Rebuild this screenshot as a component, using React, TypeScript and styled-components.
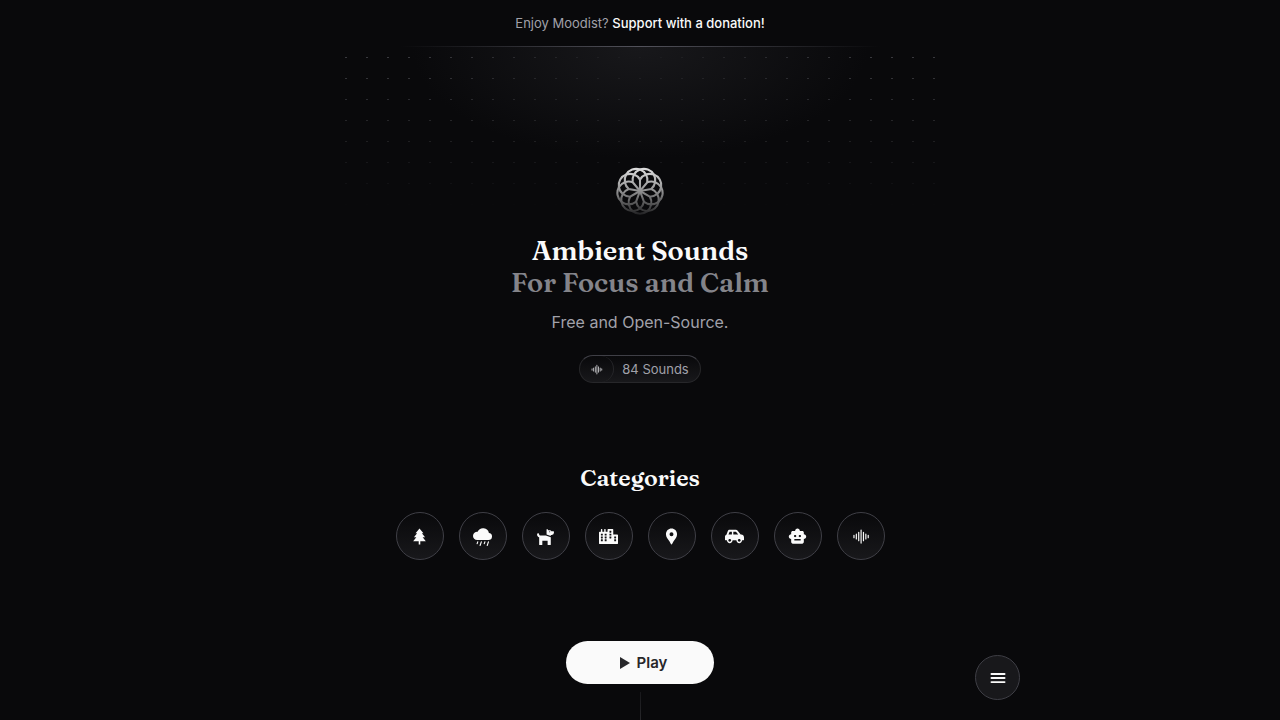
import React from 'react';
import styled, { createGlobalStyle } from 'styled-components';
import { BiPlay, BiSolidTree } from 'react-icons/bi';
import { BsFillCloudRainFill, BsSoundwave } from 'react-icons/bs';
import { FaCarSide, FaCity, FaDog } from 'react-icons/fa';
import { IoMenu } from 'react-icons/io5';
import { MdLocationPin, MdSmartToy } from 'react-icons/md';

const GlobalStyle = createGlobalStyle`
  *, *::before, *::after { box-sizing: border-box; }
  body {
    margin: 0;
    background: #09090b;
    color: #fafafa;
    font-family: Inter, "Liberation Sans", sans-serif;
    font-size: 16px;
  }
`;

const Page = styled.div`
  display: flex;
  flex-direction: column;
  min-height: 100vh;
`;

const Banner = styled.header`
  display: flex;
  flex-direction: column;
  align-items: center;
  font-size: 13px;
  line-height: 20px;
  color: #a1a1aa;
`;

const BannerText = styled.p`
  margin: 0;
  padding: 13px 0;
`;

const DonateLink = styled.a`
  color: #fafafa;
  font-weight: 500;
  text-decoration: none;
`;

const Divider = styled.div`
  width: 100%;
  max-width: 480px;
  height: 1px;
  background: linear-gradient(90deg, transparent, #52525b, transparent);
`;

const Main = styled.main`
  display: flex;
  flex: 1;
  flex-direction: column;
  align-items: center;
`;

const Hero = styled.section`
  position: relative;
  display: flex;
  flex-direction: column;
  align-items: center;
  width: 100%;
  max-width: 600px;
  padding-top: 120px;
  text-align: center;
`;

const Pattern = styled.div`
  position: absolute;
  inset: 0 0 auto;
  height: 180px;
  background-image: radial-gradient(#71717a 5%, transparent 5%);
  background-position: top center;
  background-size: 21px 21px;
  mask-image: linear-gradient(#fff, transparent 90%);
`;

const Glow = styled.div`
  position: absolute;
  inset: 0 0 auto;
  height: 140px;
  background: radial-gradient(38% 80% at 50% 0, #18181b, #18181b00);
`;

const LogoMark = styled.svg`
  position: relative;
  width: 48px;
  height: 48px;
`;

const Title = styled.h1`
  margin: 20px 0 0;
  font-family: Fraunces, "Liberation Serif", serif;
  font-size: 27px;
  font-weight: 600;
  line-height: 32px;
`;

const TitleLine = styled.span<{ $muted?: boolean }>`
  display: block;
  color: ${(p) => (p.$muted ? '#84848a' : '#fafafa')};
`;

const Tagline = styled.p`
  margin: 11px 0 0;
  line-height: 24px;
  color: #a1a1aa;
`;

const SoundCount = styled.div`
  display: flex;
  align-items: stretch;
  height: 28px;
  margin-top: 21px;
  border: 1px solid #27272a;
  border-top-color: #3f3f46;
  border-radius: 14px;
  background: linear-gradient(#09090b, #18181b);
  color: #a1a1aa;
  font-size: 13px;
  line-height: 26px;
`;

const CountIcon = styled.span`
  display: flex;
  align-items: center;
  padding: 0 10px;
  border-right: 1px solid #27272a;
  border-radius: 13px;
  color: #d4d4d8;
`;

const CountText = styled.span`
  padding: 0 11px 0 8px;
`;

const Categories = styled.nav`
  display: flex;
  flex-direction: column;
  align-items: center;
  gap: 18px;
  margin-top: 79px;
`;

const SectionTitle = styled.h2`
  margin: 0;
  font-family: Fraunces, "Liberation Serif", serif;
  font-size: 23px;
  font-weight: 600;
  line-height: 32px;
`;

const CategoryList = styled.div`
  display: flex;
  flex-wrap: wrap;
  justify-content: center;
  gap: 15px;
`;

const CategoryLink = styled.a`
  display: flex;
  align-items: center;
  justify-content: center;
  width: 48px;
  height: 48px;
  border: 1px solid #3f3f46;
  border-radius: 50%;
  background: linear-gradient(#09090b, #18181b);
  color: #fafafa;
  font-size: 19px;
`;

const PlayButton = styled.button`
  display: flex;
  align-items: center;
  justify-content: center;
  width: 148px;
  height: 43px;
  margin-top: 81px;
  padding: 0;
  border: 0;
  border-radius: 22px;
  background: #fafafa;
  color: #27272a;
  font: 600 15px/24px Inter, "Liberation Sans", sans-serif;
`;

const Connector = styled.div`
  flex: 1;
  width: 1px;
  min-height: 24px;
  margin-top: 8px;
  background: linear-gradient(#18181b, #27272a);
`;

const MenuDock = styled.div`
  position: fixed;
  right: 0;
  bottom: 20px;
  left: 0;
  display: flex;
  justify-content: flex-end;
  width: 100%;
  max-width: 760px;
  margin: 0 auto;
  pointer-events: none;
`;

const MenuButton = styled.button`
  display: flex;
  align-items: center;
  justify-content: center;
  width: 45px;
  height: 45px;
  padding: 0;
  border: 1px solid #3f3f46;
  border-radius: 50%;
  background: #18181b;
  color: #fafafa;
  font-size: 20px;
  pointer-events: auto;
`;

const petals = Array.from({ length: 9 }, (_, i) => 90 + i * 40);

function Logo() {
  return (
    <LogoMark viewBox="-24 -24 48 48" fill="none" role="img" aria-label="Moodist">
      <defs>
        <linearGradient id="fade" x1="0" y1="0" x2="0" y2="1">
          <stop offset="0" stopColor="#fff" stopOpacity="0.88" />
          <stop offset="0.5" stopColor="#fff" stopOpacity="0.55" />
          <stop offset="1" stopColor="#fff" stopOpacity="0.1" />
        </linearGradient>
        <mask id="flower" maskUnits="userSpaceOnUse" x="-24" y="-24" width="48" height="48">
          {petals.map((angle) => (
            <path
              key={angle}
              transform={`rotate(${angle})`}
              d="M0 0L5.7 -9.87A11.4 11.4 0 1 1 5.7 9.87"
              stroke="#fff"
              strokeWidth="2.1"
            />
          ))}
        </mask>
      </defs>
      <rect x="-24" y="-24" width="48" height="48" fill="url(#fade)" mask="url(#flower)" />
    </LogoMark>
  );
}

const categories = [
  { name: 'Nature', Icon: BiSolidTree },
  { name: 'Rain', Icon: BsFillCloudRainFill },
  { name: 'Animals', Icon: FaDog },
  { name: 'Urban', Icon: FaCity },
  { name: 'Places', Icon: MdLocationPin },
  { name: 'Transport', Icon: FaCarSide },
  { name: 'Things', Icon: MdSmartToy },
  { name: 'Noise', Icon: BsSoundwave },
];

export default function App() {
  return (
    <Page>
      <GlobalStyle />
      <Banner>
        <BannerText>
          Enjoy Moodist? <DonateLink href="#donate">Support with a donation!</DonateLink>
        </BannerText>
        <Divider />
      </Banner>
      <Main>
        <Hero>
          <Pattern />
          <Glow />
          <Logo />
          <Title>
            <TitleLine>Ambient Sounds</TitleLine>
            <TitleLine $muted>For Focus and Calm</TitleLine>
          </Title>
          <Tagline>Free and Open-Source.</Tagline>
          <SoundCount>
            <CountIcon>
              <BsSoundwave size={13} />
            </CountIcon>
            <CountText>84 Sounds</CountText>
          </SoundCount>
        </Hero>
        <Categories aria-labelledby="categories-title">
          <SectionTitle id="categories-title">Categories</SectionTitle>
          <CategoryList>
            {categories.map(({ name, Icon }) => (
              <CategoryLink key={name} href={`#${name.toLowerCase()}`} aria-label={name}>
                <Icon />
              </CategoryLink>
            ))}
          </CategoryList>
        </Categories>
        <PlayButton type="button">
          <BiPlay size={24} />
          Play
        </PlayButton>
        <Connector />
      </Main>
      <MenuDock>
        <MenuButton type="button" aria-label="Menu">
          <IoMenu />
        </MenuButton>
      </MenuDock>
    </Page>
  );
}
